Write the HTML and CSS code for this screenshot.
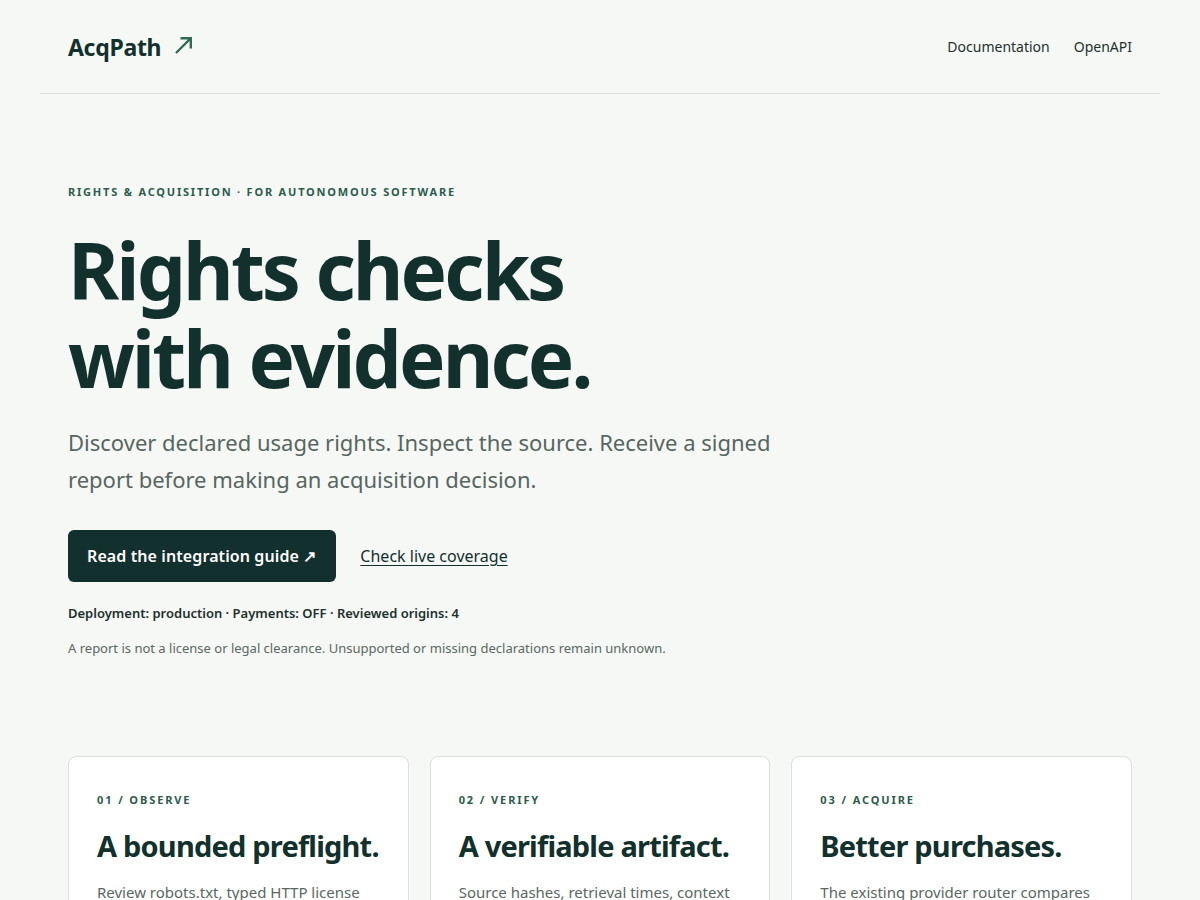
FILE: index.html
```html
<!DOCTYPE html>
<html lang="en">
<head>
<meta charset="utf-8">
<title>AcqPath — Rights checks with evidence</title>
<link rel="stylesheet" href="styles.css">
</head>
<body>
<div class="page">
  <header class="site-header">
    <a class="brand" href="#">AcqPath
      <svg class="brand-arrow" width="20" height="20" viewBox="0 0 20 20" aria-hidden="true">
        <path d="M3 18 L17.5 3.5 M7.5 3.2 H17.8 V13.5" fill="none" stroke="#2f6b57" stroke-width="2.4" stroke-linecap="butt" stroke-linejoin="miter"/>
      </svg>
    </a>
    <nav class="nav">
      <a href="#">Documentation</a>
      <a href="#">OpenAPI</a>
    </nav>
  </header>

  <main>
    <section class="hero">
      <p class="kicker">Rights &amp; acquisition · for autonomous software</p>
      <h1 class="title">Rights checks<br>with evidence.</h1>
      <p class="lede">Discover declared usage rights. Inspect the source. Receive a signed report before making an acquisition decision.</p>
      <div class="actions">
        <a class="btn" href="#">Read the integration guide ↗</a>
        <a class="link" href="#">Check live coverage</a>
      </div>
      <p class="status">Deployment: production · Payments: OFF · Reviewed origins: 4</p>
      <p class="note">A report is not a license or legal clearance. Unsupported or missing declarations remain unknown.</p>
    </section>

    <section class="cards">
      <article class="card">
        <p class="card-label">01 / Observe</p>
        <h2 class="card-title">A bounded preflight.</h2>
        <p class="card-text">Review robots.txt, typed HTTP license headers and page-level declarations for a single origin, within strict limits.</p>
      </article>
      <article class="card">
        <p class="card-label">02 / Verify</p>
        <h2 class="card-title">A verifiable artifact.</h2>
        <p class="card-text">Source hashes, retrieval times, context and a signature are bundled into a report you can check later.</p>
      </article>
      <article class="card">
        <p class="card-label">03 / Acquire</p>
        <h2 class="card-title">Better purchases.</h2>
        <p class="card-text">The existing provider router compares declared terms before any acquisition is attempted.</p>
      </article>
    </section>
  </main>
</div>
</body>
</html>
```

FILE: styles.css
```css
* { box-sizing: border-box; }

html, body {
  margin: 0;
  padding: 0;
  background: #f6f8f6;
}

body {
  font-family: "Noto Sans", "Open Sans", sans-serif;
  color: #12302c;
}

a { color: inherit; text-decoration: none; }

p, h1, h2 { margin: 0; }

.page {
  width: 1120px;
  margin: 0 auto;
}

.site-header {
  display: flex;
  align-items: center;
  justify-content: space-between;
  height: 94px;
  padding: 0 28px;
  border-bottom: 1px solid #dde2df;
}

.brand {
  font-size: 23px;
  font-weight: 700;
  letter-spacing: -0.3px;
  color: #12302c;
  display: flex;
  align-items: center;
  gap: 12px;
}

.brand-arrow {
  display: block;
  margin-top: -4px;
}

.nav {
  display: flex;
  gap: 24px;
  font-size: 14px;
  color: #1d302c;
}

.hero {
  padding: 90px 28px 0;
}

.kicker {
  font-size: 11px;
  font-weight: 700;
  letter-spacing: 1.8px;
  text-transform: uppercase;
  color: #2b5c4d;
  line-height: 16px;
}

.title {
  margin-top: 26px;
  font-size: 78px;
  line-height: 88px;
  font-weight: 700;
  letter-spacing: -2.9px;
  color: #12302c;
}

.lede {
  margin-top: 22px;
  max-width: 720px;
  font-size: 22px;
  line-height: 37px;
  color: #57665f;
}

.actions {
  margin-top: 32px;
  display: flex;
  align-items: center;
  gap: 24px;
}

.btn {
  display: inline-flex;
  align-items: center;
  height: 52px;
  padding: 0 20px 0 19px;
  border-radius: 6px;
  background: #12302e;
  color: #ffffff;
  font-size: 16px;
  font-weight: 600;
  letter-spacing: 0.1px;
}

.link {
  font-size: 16px;
  color: #12302c;
  text-decoration: underline;
  text-underline-offset: 3px;
}

.status {
  margin-top: 22px;
  font-size: 13px;
  font-weight: 600;
  color: #1d302c;
  line-height: 18px;
}

.note {
  margin-top: 17px;
  font-size: 13px;
  color: #5a6762;
  line-height: 18px;
}

.cards {
  margin: 99px 28px 60px;
  display: grid;
  grid-template-columns: repeat(3, 1fr);
  gap: 21px;
}

.card {
  background: #ffffff;
  border: 1px solid #dce2de;
  border-radius: 8px;
  padding: 35px 24px 32px 28px;
}

.card-label {
  font-size: 11px;
  font-weight: 700;
  letter-spacing: 1.9px;
  text-transform: uppercase;
  color: #2b5c4d;
  line-height: 16px;
}

.card-title {
  margin-top: 20px;
  font-size: 29px;
  line-height: 36px;
  font-weight: 700;
  letter-spacing: -0.8px;
  color: #12302c;
}

.card-text {
  margin-top: 16px;
  font-size: 15px;
  line-height: 24px;
  color: #5a6762;
}
```
